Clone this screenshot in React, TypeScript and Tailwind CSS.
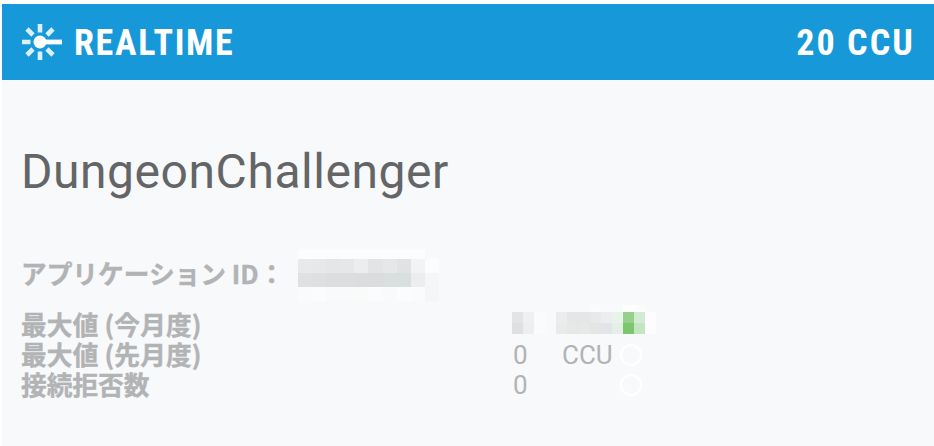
const idMosaic = [
  ["#fbfcfd", "#fbfcfd", "#fbfcfd", "#fbfcfd", "#fbfcfd", "#fbfcfd", "#fbfcfd", "#fbfcfd", "#fbfcfd", "#f8f9fb"],
  ["#e8e9ea", "#e7e8e9", "#e5e6e7", "#e6e7e8", "#ecedee", "#e3e4e5", "#e6e7e8", "#e1e2e4", "#f2f3f5", "#fbfcfe"],
  ["#dfe0e1", "#dedfe0", "#dcddde", "#dcddde", "#dbdcdd", "#dbdcdd", "#d9dedf", "#d9dedf", "#ecedee", "#f5f6f7"],
  ["#fafbfd", "#fbfcfe", "#f9fafc", "#f9fafc", "#f9fbfb", "#fbfcfe", "#f9fafc", "#fbfcfe", "#fafbfd", "#f5f6f8"],
];

const peakMosaic = [
  ["#f8f9fb", "#f8f9fb", "#f8f9fb", "#f8f9fb", "#f8f9fb", "#f8f9fb", "#f8f9fb", "#fafbfc", "#f9fafc", "#f8fafb", "#ffffff", "#fbfcfc", "#f8f9fb"],
  ["#e3e4e4", "#eff0f1", "#fafbfc", "#f8f9fb", "#ebeced", "#e5e6e7", "#e5e6e6", "#e8e9ea", "#ebedf0", "#e8f3ec", "#94d28b", "#d3ebd2", "#fdfcff"],
  ["#dfe1e0", "#edeeef", "#fafbfc", "#f8f9fb", "#e9ebea", "#e6e7e7", "#e7e8e8", "#e4e6e5", "#e3e4e8", "#e4f0e6", "#7cc76e", "#c3e5bf", "#fdfcff"],
];

function RealtimeIcon() {
  return (
    <svg width="42" height="40" viewBox="0 0 42 40" fill="none" stroke="#fff">
      <g strokeWidth="4.6" opacity="0.85">
        <path d="M18 2v8.500M18 29.500V38M0 20h8.500M5 7l6 6M31 7l-6 6M5 33l6-6M31 33l-6-6" />
      </g>
      <circle cx="18" cy="20" r="6.500" fill="#fff" stroke="none" />
      <path d="M18 20h22" strokeWidth="4.800" />
    </svg>
  );
}

export default function App() {
  return (
    <div className="h-[446px] w-[934px] overflow-hidden bg-white pt-1 pl-0.5 font-['Roboto','Noto_Sans_CJK_JP',sans-serif]">
      <div className="h-full bg-[#f8f9fb]">
        <header className="flex h-[76px] items-center justify-between bg-[#1798d9] pr-[19px] pl-5 font-['Roboto_Condensed','Roboto',sans-serif] text-[36px] font-bold text-white [font-stretch:75%]">
          <div className="flex items-center">
            <RealtimeIcon />
            <span className="ml-2.5 pt-0.5 tracking-[1.700px]">REALTIME</span>
          </div>
          <span className="pt-0.5 tracking-[2.100px]">20 CCU</span>
        </header>

        <main className="px-[19px] pt-[62px] text-[#b1b3b4]">
          <h1 className="h-[59px] text-[48px] leading-[59px] tracking-[0.550px] text-[#636567]">DungeonChallenger</h1>

          <div className="mt-12 flex h-[52px] items-start">
            <span className="w-[277px] pt-[9px] font-['Noto_Sans_CJK_JP',sans-serif] text-[25.700px] leading-[30px] font-bold whitespace-nowrap [-webkit-text-stroke:0.400px]">
              アプリケーション ID：
            </span>
            <div className="grid grid-cols-[repeat(10,14.100px)] grid-rows-[10px_14px_14px_14px]">
              {idMosaic.flat().map((color, i) => (
                <i key={i} style={{ backgroundColor: color }} />
              ))}
            </div>
          </div>

          <div className="mt-2 flex">
            <div className="w-[491px] font-['Noto_Sans_CJK_JP',sans-serif] text-[25.700px] leading-[30px] font-bold [-webkit-text-stroke:0.400px]">
              <div className="tracking-[0.150px]">最大値 (今月度)</div>
              <div className="tracking-[0.150px]">最大値 (先月度)</div>
              <div>接続拒否数</div>
            </div>
            <div className="-mt-1">
              <div className="grid h-[35px] grid-cols-[repeat(13,11.100px)] grid-rows-[7px_11px_11px]">
                {peakMosaic.flat().map((color, i) => (
                  <i key={i} style={{ backgroundColor: color }} />
                ))}
              </div>
              <div className="flex h-[30px] items-center pl-px text-[26px] leading-[30px]">
                <span className="w-[49px]">0</span>
                <span className="w-[58px]">CCU</span>
                <span className="size-[22px] rounded-full border-2 border-white" />
              </div>
              <div className="flex h-[30px] items-center pl-px text-[26px] leading-[30px]">
                <span className="w-[107px]">0</span>
                <span className="size-[22px] rounded-full border-2 border-white" />
              </div>
            </div>
          </div>
        </main>
      </div>
    </div>
  );
}
